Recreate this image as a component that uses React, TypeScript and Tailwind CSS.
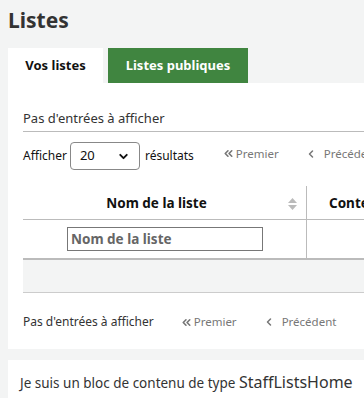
import { ChevronsLeft, ChevronLeft, ChevronDown } from "lucide-react";

const font = { fontFamily: '"Noto Sans", "Open Sans", sans-serif' };

const Pager = () => (
  <div className="flex items-center text-[11.5px] text-[#777]">
    <span className="flex items-center">
      <ChevronsLeft size={13} strokeWidth={3} className="mr-px" />
      Premier
    </span>
    <span className="ml-[26px] flex items-center">
      <ChevronLeft size={12} strokeWidth={3} className="mr-[7px]" />
      Précédent
    </span>
  </div>
);

const App = () => {
  return (
    <div
      className="h-[398px] w-[364px] overflow-hidden bg-[#f3f4f4] text-[#333]"
      style={font}
    >
      <h1 className="pl-2 pt-[5px] text-[21px] font-bold leading-[30px] text-[#333]">
        Listes
      </h1>
      <div className="mt-[13px] flex h-[35px] pl-2">
        <div className="flex w-[95px] items-center justify-center bg-white text-[13px] font-bold text-[#111]">
          Vos listes
        </div>
        <div className="ml-[5px] flex w-[140px] items-center justify-center bg-[#408540] text-[13px] font-bold text-white">
          Listes publiques
        </div>
      </div>
      <div className="ml-2 w-[500px] bg-white pb-[18px] pl-[15px] pt-[26px]">
        <div className="border-b border-[#bbb] pb-[4px] text-[13px] leading-[18px] text-[#333]">
          Pas d'entrées à afficher
        </div>
        <div className="mt-[10px] flex items-center text-[12px] text-[#111]">
          <span>Afficher</span>
          <div className="ml-[3px] flex h-[28px] w-[70px] items-center justify-between rounded-[4px] border border-[#888] px-[9px] text-[13px]">
            <span>20</span>
            <ChevronDown size={13} strokeWidth={3.5} />
          </div>
          <span className="ml-[5px]">résultats</span>
          <div className="ml-[28px] -mt-[5px]">
            <Pager />
          </div>
        </div>
        <div className="mt-[16px] flex">
          <div className="w-[283px]">
            <div className="flex h-[34px] items-center border-b border-[#bbb] pr-[9px] pt-[2px]">
              <span className="flex-1 pl-[2px] text-center text-[13.5px] font-bold text-[#111]">
                Nom de la liste
              </span>
              <svg width="9" height="12" viewBox="0 0 9 12" className="text-[#bbb]">
                <path d="M4.5 0 L9 5 L0 5 Z" fill="currentColor" />
                <path d="M4.5 12 L9 7 L0 7 Z" fill="currentColor" />
              </svg>
            </div>
            <div className="flex h-[38px] items-center pl-[44px]">
              <div className="flex h-[24px] w-[196px] items-center border border-[#777] px-[3px] text-[13.5px] font-bold text-[#666]">
                Nom de la liste
              </div>
            </div>
          </div>
          <div className="flex-1 border-l border-[#bbb]">
            <div className="flex h-[34px] items-center border-b border-[#bbb] pl-[22px] pt-[2px] text-[13.5px] font-bold text-[#111]">
              Contenu
            </div>
            <div className="h-[38px]" />
          </div>
        </div>
        <div className="h-[35px] border-b border-t-2 border-[#bbb] border-b-[#ccc] bg-[#f3f4f4]" />
        <div className="mt-[20px] flex items-center text-[12px] leading-[18px] text-[#333]">
          <span>Pas d'entrées à afficher</span>
          <div className="ml-[26px]">
            <Pager />
          </div>
        </div>
      </div>
      <div className="ml-2 mt-[11px] h-[60px] bg-white pl-[12px] pt-[10px] text-[13.5px] text-[#333]">
        Je suis un bloc de contenu de type <span className="text-[16px]">StaffListsHome</span>
      </div>
    </div>
  );
};

export default App;
